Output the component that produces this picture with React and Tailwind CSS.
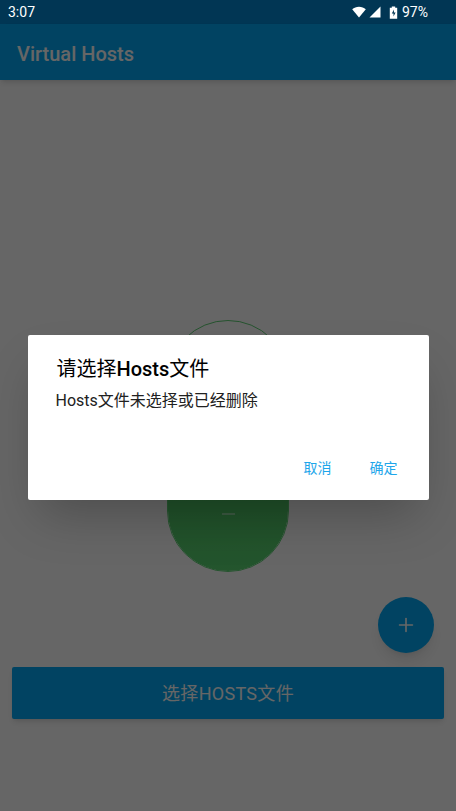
import { Plus } from 'lucide-react';

const font = { fontFamily: 'Roboto, "Noto Sans CJK SC", sans-serif' };

function StatusBar() {
  return (
    <div className="h-[24px] bg-[#013654] flex items-center justify-between pl-[8px] pr-[28px] text-white text-[14px]">
      <span className="leading-none">3:07</span>
      <div className="flex items-center gap-[3px]">
        <svg width="14" height="12" viewBox="0 0 14 12">
          <path d="M7 11.5 0.2 3.3C2 1.8 4.4 0.8 7 0.8s5 1 6.8 2.5Z" fill="white" />
        </svg>
        <svg width="12" height="12" viewBox="0 0 12 12">
          <path d="M11.5 0.5V11.5H0.5Z" fill="white" />
        </svg>
        <svg width="9" height="13" viewBox="0 0 9 13" className="ml-[5px]">
          <path d="M2.8 0.5h3.4v1.2H8.2V12.8H0.8V1.7h2Z" fill="white" />
          <path d="M5 3.5 2.8 7.6h1.7V10.6L6.6 6.5H4.9Z" fill="#013654" />
        </svg>
        <span className="leading-none ml-[1px]">97%</span>
      </div>
    </div>
  );
}

export default function App() {
  return (
    <div className="relative h-[811px] w-[456px] overflow-hidden bg-white" style={font}>
      <StatusBar />
      <header className="h-[56px] bg-[#03a9f4] flex items-center px-[17px] pt-[3px] shadow-md">
        <h1 className="text-white text-[20px] font-medium">Virtual Hosts</h1>
      </header>

      <main className="flex flex-col">
        <div className="mx-auto mt-[240px] w-[122px] h-[252px] rounded-full border-[1.5px] border-[#5fd176] flex flex-col justify-end overflow-hidden">
          <div className="h-[130px] rounded-b-full bg-gradient-to-b from-[#48bb5c] to-[#5ad572] flex justify-center pt-[72px]">
            <span className="block w-[13px] h-[1.5px] bg-white/40" />
          </div>
        </div>

        <div className="flex justify-end pr-[22px] mt-[25px]">
          <button className="w-[56px] h-[56px] rounded-full bg-[#03a9f4] shadow-lg flex items-center justify-center text-white">
            <Plus size={22} strokeWidth={1.8} />
          </button>
        </div>

        <button className="mx-[12px] mt-[14px] h-[52px] rounded-[2px] bg-[#03a9f4] shadow-md text-white text-[18px] tracking-[0.3px]">
          选择HOSTS文件
        </button>
      </main>

      {/* dim + dialog */}
      <div className="absolute inset-x-0 top-[24px] bottom-0 bg-black/60 flex items-center justify-center">
        <div className="w-[401px] h-[165px] bg-white rounded-[2px] shadow-2xl flex flex-col px-[28px] pt-[21px]">
          <h2 className="text-[20px] leading-[26px] text-black pl-[1px]">
            请选择<span className="font-medium">Hosts</span>文件
          </h2>
          <p className="mt-[8px] text-[16px] leading-[22px] text-[#212121]">Hosts文件未选择或已经删除</p>
          <div className="mt-auto mb-[21px] flex justify-end gap-[38px] pr-[3px] text-[14px] text-[#1ea6ea]">
            <span>取消</span>
            <span>确定</span>
          </div>
        </div>
      </div>
    </div>
  );
}
